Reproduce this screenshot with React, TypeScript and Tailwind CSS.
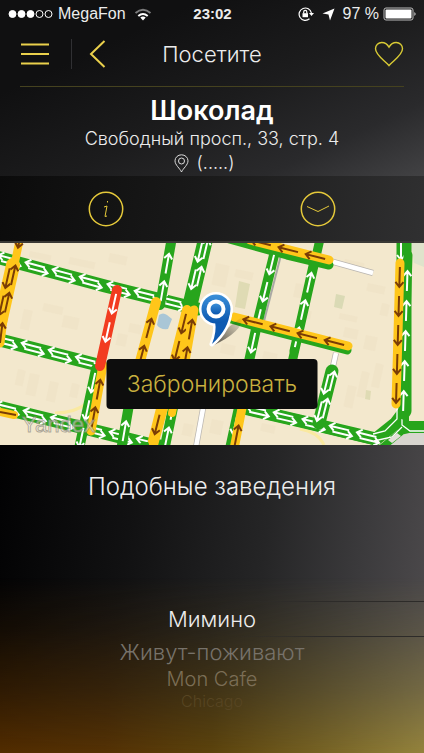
import type { ReactNode } from "react";

type Point = [number, number];

type RoadProps = {
    points: Point[];
    color: string;
    width: number;
    arrows?: "one" | "both";
    arrowColor?: string;
    step?: number;
    start?: number;
};

const GREEN = "#27a51c";
const YELLOW = "#ffc61a";
const BROWN = "#7a3c06";

function Arrow({ x, y, angle, color }: { x: number; y: number; angle: number; color: string }) {
    return (
        <path
            d="M-10 0H10M5 -4L10 0L5 4"
            transform={`translate(${x} ${y}) rotate(${angle})`}
            fill="none"
            stroke={color}
            strokeWidth="2"
        />
    );
}

// A street with its traffic colour and direction arrows
function Road({ points, color, width, arrows, arrowColor = "#fff", step = 28, start = 14 }: RoadProps) {
    const marks: ReactNode[] = [];
    if (arrows) {
        for (let i = 0; i < points.length - 1; i++) {
            const [x1, y1] = points[i];
            const [x2, y2] = points[i + 1];
            const length = Math.hypot(x2 - x1, y2 - y1);
            const dx = (x2 - x1) / length;
            const dy = (y2 - y1) / length;
            const angle = (Math.atan2(dy, dx) * 180) / Math.PI;
            for (let d = start; d < length - 6; d += step) {
                const x = x1 + dx * d;
                const y = y1 + dy * d;
                if (arrows === "one") {
                    marks.push(<Arrow key={`${i}-${d}`} x={x} y={y} angle={angle} color={arrowColor} />);
                } else {
                    marks.push(
                        <g key={`${i}-${d}`}>
                            <Arrow x={x - dy * 2.5 + dx * 2} y={y + dx * 2.5 + dy * 2} angle={angle} color={arrowColor} />
                            <Arrow x={x + dy * 2.5 - dx * 2} y={y - dx * 2.5 - dy * 2} angle={angle + 180} color={arrowColor} />
                        </g>
                    );
                }
            }
        }
    }
    return (
        <g>
            <polyline
                points={points.map((p) => p.join(",")).join(" ")}
                fill="none"
                stroke={color}
                strokeWidth={width}
                strokeLinecap="round"
                strokeLinejoin="round"
            />
            {marks}
        </g>
    );
}

function SideStreet({ points }: { points: Point[] }) {
    const line = points.map((p) => p.join(",")).join(" ");
    return (
        <g fill="none">
            <polyline points={line} stroke="#b9b5b0" strokeWidth="6" />
            <polyline points={line} stroke="#fff" strokeWidth="4.5" />
        </g>
    );
}

const blocks = [
    [30, 8, 22, 6], [70, 14, 26, 7], [110, 10, 18, 9], [44, 60, 20, 8], [64, 72, 16, 12], [24, 66, 9, 20],
    [30, 130, 10, 22], [50, 138, 9, 20], [18, 126, 8, 16], [72, 140, 8, 14], [216, 20, 14, 22], [236, 26, 18, 8],
    [222, 100, 14, 10], [345, 16, 20, 8], [368, 40, 18, 8], [345, 84, 14, 10], [366, 92, 12, 14], [340, 70, 18, 6],
    [362, 128, 8, 26], [376, 120, 8, 24], [348, 142, 9, 22], [382, 60, 8, 12], [300, 66, 12, 8], [264, 108, 14, 8],
    [130, 80, 12, 9], [118, 90, 10, 12], [184, 180, 10, 12], [212, 176, 12, 14], [262, 180, 14, 8], [296, 40, 10, 14],
];

function TrafficMap() {
    return (
        <svg viewBox="0 0 424 202" preserveAspectRatio="xMidYMid slice" className="block h-[202px] w-full" aria-hidden="true">
            <defs>
                <linearGradient id="pinBlue" x1="0" y1="0" x2="0" y2="1">
                    <stop offset="0" stopColor="#3a8fd9" />
                    <stop offset="1" stopColor="#0a56ae" />
                </linearGradient>
                <linearGradient id="pinShadow" x1="0" y1="1" x2="1" y2="0">
                    <stop offset="0" stopColor="#000" stopOpacity="0.7" />
                    <stop offset="1" stopColor="#000" stopOpacity="0" />
                </linearGradient>
            </defs>
            <rect width="424" height="202" fill="#f3e8cd" />
            {blocks.map(([x, y, w, h]) => (
                <rect key={`${x}-${y}`} x={x} y={y} width={w} height={h} fill="#eadcc0" opacity="0.35" transform={`rotate(12 ${x} ${y})`} />
            ))}
            <path d="M239 38l11 3-5 25-10-2z" fill="#dfdbb4" />
            <path d="M336 51l9 2-3 13-8-2z" fill="#dadab5" />
            <path d="M366 147l5 1-1 9-5-1z" fill="#dfdbb4" />
            <path d="M159 72q4-3 8 0l5 4-4 10q-8 1-11-4z" fill="#a9c6d6" />
            <path d="M411 0h13v24l-10-4z" fill="#dfe3cb" />
            <path d="M55 170q20 0 32-10M300 186q18 3 24 16" fill="none" stroke="#fae9a0" strokeWidth="3" />
            <path d="M386 202q4-14 14-14l24 2v12z" fill="#d8d5cf" />
            <path d="M281 12L262 86" fill="none" stroke="#aaa9a4" strokeWidth="2" />

            <SideStreet points={[[330, 18], [373, 30]]} />
            <SideStreet points={[[336, 110], [332, 128]]} />
            <SideStreet points={[[204, 160], [196, 204]]} />

            <Road points={[[226, -5], [287, 12], [329, 22]]} color={GREEN} width={9} />
            <Road points={[[320, -4], [291, 124]]} color={GREEN} width={9} />
            <Road points={[[294, 108], [315, 14]]} color={GREEN} width={9} arrows="one" />
            <Road points={[[275, 8], [256, 86], [230, 206]]} color={GREEN} width={10} arrows="one" />
            <Road points={[[-4, 14], [105, 43], [198, 66]]} color={GREEN} width={13} arrows="both" />
            <Road points={[[198, 66], [262, 85], [347, 107]]} color={GREEN} width={9} />
            <Road points={[[-8, 95], [98, 122]]} color={GREEN} width={13} arrows="both" />
            <Road points={[[-6, 163], [80, 184], [160, 204]]} color={GREEN} width={13} arrows="both" />
            <Road points={[[160, 62], [172, -6]]} color={GREEN} width={10} arrows="one" />
            <Road points={[[206, -6], [190, 62]]} color={GREEN} width={15} arrows="both" />
            <Road points={[[96, 126], [79, 206]]} color={GREEN} width={10} arrows="one" />
            <Road points={[[122, 202], [130, 156]]} color={GREEN} width={10} arrows="one" />
            <Road points={[[164, 208], [174, 160]]} color={GREEN} width={10} arrows="one" />
            <Road points={[[140, 204], [160, 200]]} color={GREEN} width={7} />

            <Road points={[[244, 165], [300, 178], [376, 196], [396, 180], [405, 168], [405, -4]]} color={GREEN} width={13} />
            <Road points={[[244, 165], [300, 178], [374, 196]]} color={GREEN} width={12} arrows="both" />
            <Road points={[[403, 170], [403, 184], [424, 184]]} color={GREEN} width={12} />
            <Road points={[[378, 208], [402, 188], [428, 182]]} color={GREEN} width={7} />
            <path d="M373 191l12-3 12-12V164M402 164v18l8 6h18M374 198l18-4 10-10" fill="none" stroke="#fff" strokeWidth="1.3" />
            <path d="M388 197l9-7 4 3-9 7z" fill="#e3e0da" />
            <Road points={[[401, 0], [401, 18]]} color={GREEN} width={9} arrows="one" start={7} />
            <Road points={[[403, 172], [408, 12]]} color={GREEN} width={9} arrows="one" step={30} />
            <Road points={[[332, 128], [319, 180]]} color={GREEN} width={13} arrows="both" start={12} />

            <Road points={[[20, -5], [14, 24]]} color={YELLOW} width={8} arrows="one" arrowColor={BROWN} start={0} />
            <Road points={[[13, 22], [0, 80]]} color={YELLOW} width={14} arrows="both" arrowColor={BROWN} start={12} />
            <Road points={[[0, 100], [3, 76]]} color={YELLOW} width={9} arrows="one" arrowColor={BROWN} start={10} />
            <Road points={[[-4, 168], [14, 172]]} color={YELLOW} width={8} />
            <path d="M0 169l16 3" stroke={BROWN} strokeWidth="2" />
            <Road points={[[91, 188], [103, 122]]} color={YELLOW} width={9} arrows="one" arrowColor={BROWN} />
            <Road points={[[138, 126], [156, 59]]} color={YELLOW} width={10} arrows="one" arrowColor={BROWN} />
            <Road points={[[187, 67], [176, 118], [153, 204]]} color={YELLOW} width={9} />
            <Road points={[[187, 67], [173, 124]]} color={YELLOW} width={10} arrows="one" arrowColor={BROWN} />
            <Road points={[[184, 124], [194, 67]]} color={YELLOW} width={9} arrows="one" arrowColor={BROWN} start={10} />
            <Road points={[[162, 162], [153, 198]]} color={YELLOW} width={10} arrows="one" arrowColor={BROWN} start={20} />
            <Road points={[[172, 170], [174, 160]]} color={YELLOW} width={8} />
            <Road points={[[234, 206], [243, 160]]} color={YELLOW} width={9} arrows="one" arrowColor={BROWN} />
            <Road points={[[329, 17], [250, -3]]} color={YELLOW} width={9} arrows="one" arrowColor={BROWN} />
            <Road points={[[348, 103], [234, 74]]} color={YELLOW} width={9} arrows="one" arrowColor={BROWN} />
            <Road points={[[400, 20], [396, 161]]} color={YELLOW} width={9} arrows="one" arrowColor={BROWN} step={29} />
            <Road points={[[117, 47], [100, 123]]} color="#f23c20" width={10} arrows="one" step={29} />

            <text
                x="22"
                y="189"
                fontFamily="'Liberation Sans Narrow', 'Liberation Sans', sans-serif"
                fontSize="22"
                fill="#fff"
                fillOpacity="0.45"
                stroke="#8f8a7c"
                strokeOpacity="0.7"
                strokeWidth="1"
            >
                Yandex
            </text>

            <path d="M212 103q8-14 30-29 2 14-30 29z" fill="url(#pinShadow)" />
            <g stroke="#fff" strokeWidth="5" strokeLinejoin="round">
                <circle cx="216" cy="66" r="14.500" />
                <path d="M215 78q2 11-3 23Q229 86 230 68z" />
            </g>
            <path d="M215 78q2 11-3 23Q229 86 230 68z" fill="#0d5ab2" />
            <circle cx="216" cy="66" r="14.500" fill="url(#pinBlue)" />
            <circle cx="216" cy="66" r="9.500" fill="#fff" />
            <circle cx="216" cy="66" r="5.500" fill="url(#pinBlue)" />
        </svg>
    );
}

function StatusBar() {
    return (
        <div className="grid h-7 grid-cols-[1fr_auto_1fr] items-center pr-[7px] pl-2 font-['Liberation_Sans',sans-serif] text-base leading-5">
            <div className="flex items-center">
                <svg width="46" height="10" viewBox="0 0 46 10" fill="#fff" stroke="#fff">
                    <circle cx="4.500" cy="5" r="3.500" />
                    <circle cx="13.500" cy="5" r="3.500" />
                    <circle cx="22.500" cy="5" r="3.500" />
                    <circle cx="31.500" cy="5" r="3.500" fill="none" />
                    <circle cx="40.500" cy="5" r="3.500" fill="none" />
                </svg>
                <span className="ml-1">MegaFon</span>
                <svg className="ml-2" width="18" height="13" viewBox="0 0 18 13" fill="none" stroke="#fff" strokeWidth="2">
                    <path d="M1.500 5q7.500-6.500 15 0" opacity="0.45" />
                    <path d="M4.300 8q4.700-4 9.400 0" />
                    <path d="M6.300 9.500q2.700-2 5.400 0L9 12.500z" fill="#fff" stroke="none" />
                </svg>
            </div>
            <div className="text-[15px] font-bold">23:02</div>
            <div className="flex items-center justify-end">
                <svg width="16" height="16" viewBox="0 0 16 16" fill="none" stroke="#fff" strokeWidth="1.200">
                    <path d="M11.500 12.800A6.200 6.200 0 1 1 13.400 7" />
                    <path d="M11 7h5l-2.500 3z" fill="#fff" stroke="none" />
                    <path d="M4.500 7.200h5.500v4H4.500z" fill="#fff" stroke="none" />
                    <path d="M5.700 7.500V6a1.500 1.500 0 0 1 3.100 0v1.500" />
                </svg>
                <svg className="ml-2" width="13" height="13" viewBox="0 0 13 13" fill="#fff">
                    <path d="M12.500.5L8 12.500l-1.500-6-6-1z" />
                </svg>
                <span className="ml-2">97 %</span>
                <svg className="ml-1" width="34" height="14" viewBox="0 0 34 14">
                    <rect x="1" y="1" width="29" height="12" rx="2" fill="none" stroke="#bbb" />
                    <rect x="2.500" y="2.500" width="26" height="9" rx="1" fill="#fff" />
                    <path d="M31.500 5q2 2 0 4z" fill="#fff" />
                </svg>
            </div>
        </div>
    );
}

function NavBar() {
    return (
        <nav className="mx-5 grid h-[59px] grid-cols-[1fr_auto_1fr] items-center border-b border-[#45421f] pb-[6px]">
            <div className="flex items-center">
                <button type="button" aria-label="Меню">
                    <svg width="29" height="24" viewBox="0 0 29 24" stroke="#ead04c" strokeWidth="2">
                        <path d="M1 2.500h28M1 12h28M1 21.500h28" />
                    </svg>
                </button>
                <span className="ml-[22px] h-[30px] w-px bg-[#303033]" />
                <button type="button" aria-label="Назад" className="ml-[17px]">
                    <svg width="17" height="28" viewBox="0 0 17 28" fill="none" stroke="#ead04c" strokeWidth="2">
                        <path d="M15.500 1L2 14l13.500 13" />
                    </svg>
                </button>
            </div>
            <h1 className="text-[22px] leading-7">Посетите</h1>
            <button type="button" aria-label="В избранное" className="justify-self-end">
                <svg width="30" height="26" viewBox="0 0 30 26" fill="none" stroke="#d9cb35" strokeWidth="1.400">
                    <path d="M15 24.500C12 20.500 1.500 14.500 1.500 7.800 1.500 4 4.400 1.500 7.800 1.500c3.200 0 5.700 2 7.200 4.600 1.500-2.600 4-4.600 7.200-4.600 3.400 0 6.300 2.500 6.300 6.300 0 6.700-10.500 12.700-13.500 16.700z" />
                </svg>
            </button>
        </nav>
    );
}

export default function App() {
    return (
        <div className="flex min-h-screen flex-col bg-black font-['Inter','Liberation_Sans',sans-serif] font-light text-[#ececec]">
            <header className="bg-[linear-gradient(155deg,#101011_25%,#1c1c1d_55%,#2a2a2c_80%,#424244_100%)]">
                <StatusBar />
                <NavBar />
                <div className="flex h-[89px] flex-col items-center pt-2">
                    <h2 className="text-[27px] leading-8 font-semibold text-white">Шоколад</h2>
                    <p className="text-lg leading-6">Свободный просп., 33, стр. 4</p>
                    <p className="flex items-center pr-4 text-lg leading-6">
                        <svg className="mr-2" width="15" height="19" viewBox="0 0 15 19" fill="none" stroke="#ddd">
                            <path d="M7.500 18C6 14.500 1 11 1 6.800a6.500 6 0 0 1 13 0C14 11 9 14.500 7.500 18z" />
                            <circle cx="7.500" cy="7" r="3" />
                        </svg>
                        (.....)
                    </p>
                </div>
            </header>

            <div className="grid h-[67px] grid-cols-2 items-center border-b-2 border-[#3a3935] bg-[linear-gradient(100deg,#0b0b0b,#191919_45%,#303031)]">
                <button type="button" aria-label="Информация" className="justify-self-center">
                    <svg width="36" height="36" viewBox="0 0 36 36" fill="none" stroke="#e4c83a">
                        <circle cx="18" cy="18" r="16.700" strokeWidth="1.500" />
                        <path d="M19.500 10v1.500M16 16l3-1-2 10.500 2-.5" />
                    </svg>
                </button>
                <button type="button" aria-label="Часы работы" className="justify-self-center">
                    <svg width="36" height="36" viewBox="0 0 36 36" fill="none" stroke="#e4c83a">
                        <circle cx="18" cy="18" r="16.700" strokeWidth="1.500" />
                        <path d="M7 15.500l11 5 11-5.500" />
                    </svg>
                </button>
            </div>

            <div className="relative">
                <TrafficMap />
                <button
                    type="button"
                    className="absolute bottom-9 left-1/2 h-[50px] w-[211px] -translate-x-1/2 rounded-sm bg-[#0d0d0d] text-[23px] text-[#c9b13f]"
                >
                    Забронировать
                </button>
            </div>

            <section className="relative isolate flex grow flex-col bg-[linear-gradient(97deg,#020203,#111112_30%,#252526_60%,#3c3b3d_82%,#4f4c4e)] text-center">
                {/* warm glow along the bottom edge */}
                <div className="absolute inset-x-0 bottom-0 -z-10 h-44 bg-[linear-gradient(to_right,#522c00,#553204_25%,#5c430c_50%,#766223_75%,#94833c)] mask-[linear-gradient(to_top,black,#0000008c_35%,#00000033_70%,transparent)]" />
                <h2 className="mt-6 text-2xl leading-9">Подобные заведения</h2>
                <div className="mt-24" role="listbox" aria-label="Подобные заведения">
                    <div className="h-px bg-linear-to-r from-transparent from-55% to-[#2d2b29] to-75%" />
                    <div className="text-[22px] leading-[34px]" role="option" aria-selected="true">Мимино</div>
                    <div className="h-px bg-linear-to-r from-transparent from-55% to-[#2d2b29] to-75%" />
                    <div className="text-[22px] leading-[30px] text-[#77726a]" role="option" aria-selected="false">Живут-поживают</div>
                    <div className="text-xl leading-6 text-[#7b6e56]" role="option" aria-selected="false">Mon Cafe</div>
                    <div className="text-base leading-5 text-[#574522]" role="option" aria-selected="false">Chicago</div>
                </div>
            </section>
        </div>
    );
}
